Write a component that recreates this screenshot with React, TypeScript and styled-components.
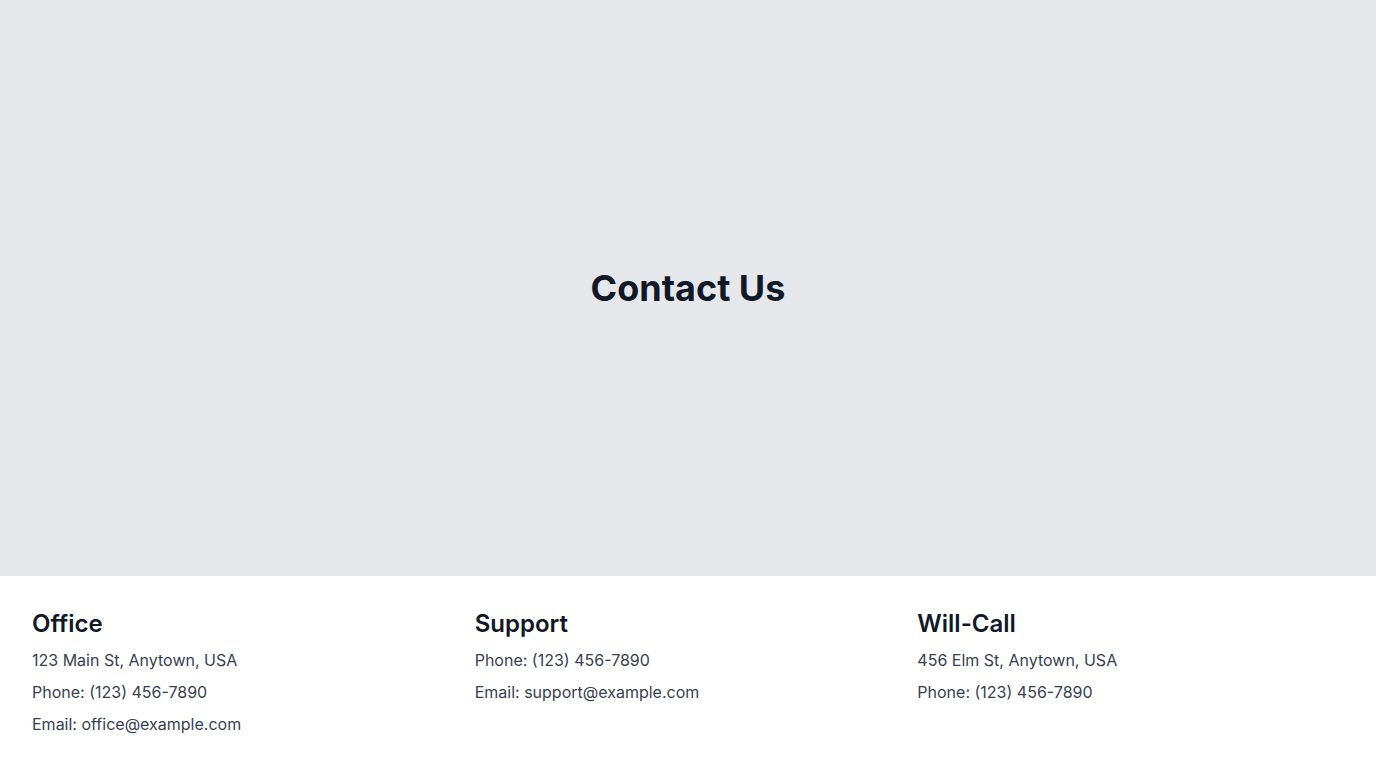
import React from "react";
import styled, { createGlobalStyle } from "styled-components";

const Global = createGlobalStyle`
  * { box-sizing: border-box; }
  body { margin: 0; font-family: Inter, "Noto Sans", sans-serif; background: #ffffff; }
  h1, h2, p { margin: 0; }
`;

const Hero = styled.section`
  height: 576px;
  background: #e5e7eb;
  display: flex;
  align-items: center;
  justify-content: center;
`;

const Title = styled.h1`
  font-size: 36px;
  line-height: 40px;
  font-weight: 700;
  color: #111827;
`;

const Footer = styled.footer`
  display: grid;
  grid-template-columns: repeat(3, 1fr);
  gap: 16px;
  padding: 32px;
  background: #ffffff;
`;

const Column = styled.div`
  display: flex;
  flex-direction: column;
  gap: 8px;
`;

const Heading = styled.h2`
  font-size: 24px;
  line-height: 32px;
  font-weight: 600;
  color: #111827;
`;

const Line = styled.p`
  font-size: 16px;
  line-height: 24px;
  color: #374151;
`;

const columns = [
  { title: "Office", lines: ["123 Main St, Anytown, USA", "Phone: (123) 456-7890", "Email: office@example.com"] },
  { title: "Support", lines: ["Phone: (123) 456-7890", "Email: support@example.com"] },
  { title: "Will-Call", lines: ["456 Elm St, Anytown, USA", "Phone: (123) 456-7890"] },
];

export default function App() {
  return (
    <>
      <Global />
      <Hero>
        <Title>Contact Us</Title>
      </Hero>
      <Footer>
        {columns.map((c) => (
          <Column key={c.title}>
            <Heading>{c.title}</Heading>
            {c.lines.map((l) => (
              <Line key={l}>{l}</Line>
            ))}
          </Column>
        ))}
      </Footer>
    </>
  );
}
